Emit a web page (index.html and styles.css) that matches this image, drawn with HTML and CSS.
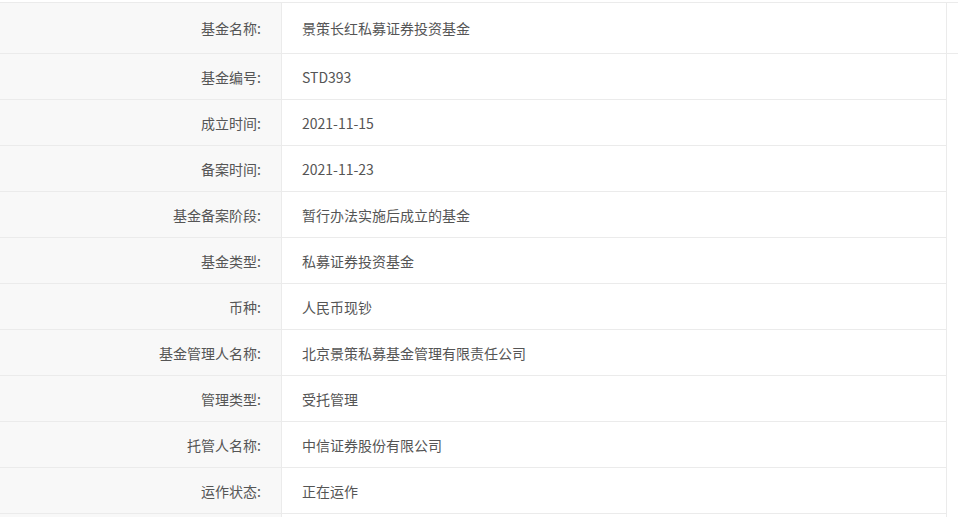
FILE: index.html
```html
<!DOCTYPE html>
<html lang="zh-CN">
<head>
<meta charset="utf-8">
<title>基金详情</title>
<link rel="stylesheet" href="styles.css">
</head>
<body>
<div class="page">
  <div class="info">
    <div class="row row-first"><div class="label">基金名称:</div><div class="value">景策长红私募证券投资基金</div></div>
    <div class="row"><div class="label">基金编号:</div><div class="value">STD393</div></div>
    <div class="row"><div class="label">成立时间:</div><div class="value">2021-11-15</div></div>
    <div class="row"><div class="label">备案时间:</div><div class="value">2021-11-23</div></div>
    <div class="row"><div class="label">基金备案阶段:</div><div class="value">暂行办法实施后成立的基金</div></div>
    <div class="row"><div class="label">基金类型:</div><div class="value">私募证券投资基金</div></div>
    <div class="row"><div class="label">币种:</div><div class="value">人民币现钞</div></div>
    <div class="row"><div class="label">基金管理人名称:</div><div class="value">北京景策私募基金管理有限责任公司</div></div>
    <div class="row"><div class="label">管理类型:</div><div class="value">受托管理</div></div>
    <div class="row"><div class="label">托管人名称:</div><div class="value">中信证券股份有限公司</div></div>
    <div class="row"><div class="label">运作状态:</div><div class="value">正在运作</div></div>
    <div class="row"><div class="label"></div><div class="value"></div></div>
  </div>
  <div class="side"><div class="side-cell"></div></div>
</div>
</body>
</html>
```
FILE: styles.css
```css
html, body {
  margin: 0;
  padding: 0;
  background: #fff;
  overflow: hidden;
}
body {
  font-family: "Noto Sans CJK SC", "Noto Sans", sans-serif;
  font-size: 14px;
  color: #555;
}
.page {
  margin-top: 2px;
  border-top: 1px solid #ebebeb;
  display: flex;
  align-items: flex-start;
}
.info {
  width: 946px;
  border-right: 1px solid #ebebeb;
  flex: none;
}
.row {
  display: flex;
  height: 45px;
  border-bottom: 1px solid #ebebeb;
}
.row-first {
  height: 50px;
}
.label {
  width: 261px;
  flex: none;
  background: #f8f8f8;
  border-right: 1px solid #ebebeb;
  padding-right: 20px;
  display: flex;
  align-items: center;
  justify-content: flex-end;
  color: #555;
}
.value {
  flex: 1;
  padding-left: 20px;
  display: flex;
  align-items: center;
  color: #555;
}
.side {
  flex: 1;
}
.side-cell {
  height: 50px;
  border-bottom: 1px solid #ebebeb;
}
```
